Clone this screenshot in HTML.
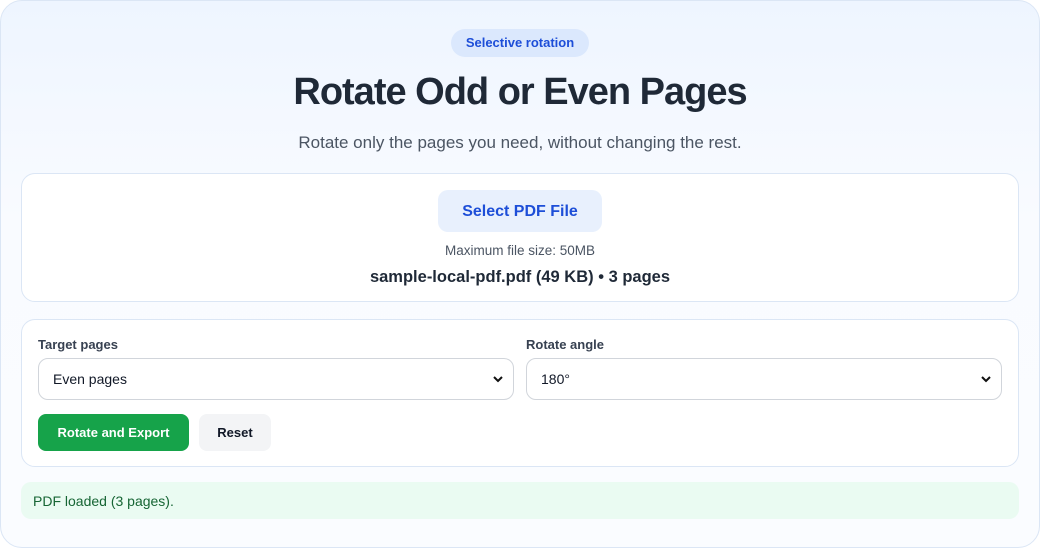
<!DOCTYPE html>
<html><head><style>
*{box-sizing:border-box;margin:0;padding:0}
body{width:1040px;height:548px;background:#fff;font-family:"Liberation Sans",sans-serif;position:relative;overflow:hidden}
.card{position:absolute;left:0;top:0;width:1040px;height:548px;border:1px solid #dbe6f5;border-radius:22px;background:linear-gradient(#eef5ff,#f9fbff 40%,#fafcff)}
.abs{position:absolute}
.pill{left:451px;top:29px;width:138px;height:28px;border-radius:14px;background:#dbe8fd;color:#1d4ed8;font-weight:bold;font-size:13px;line-height:28px;text-align:center}
h1{position:absolute;left:0;width:1040px;top:71px;text-align:center;font-size:38px;color:#1f2937;letter-spacing:-1px;font-weight:bold}
.sub{left:0;width:1040px;top:133px;text-align:center;font-size:17px;color:#4b5563}
.box{background:#fff;border:1px solid #dbe6f5;border-radius:14px}
.btn1{left:438px;top:190px;width:164px;height:42px;border-radius:10px;background:#e8f0fd;color:#1d4ed8;font-weight:bold;font-size:16px;line-height:44px;text-align:center}
.lbl{font-size:13px;font-weight:bold;color:#374151}
.sel{height:42px;border:1px solid #d1d5db;border-radius:10px;background:#fff;font-size:14px;color:#111827;line-height:40px;padding-left:14px}
.sel svg{position:absolute;right:10px;top:15px}
</style></head><body>
<div class="card"></div>
<div class="abs pill">Selective rotation</div>
<h1>Rotate Odd or Even Pages</h1>
<div class="abs sub">Rotate only the pages you need, without changing the rest.</div>
<div class="abs box" style="left:21px;top:173px;width:998px;height:129px"></div>
<div class="abs btn1">Select PDF File</div>
<div class="abs" style="left:0;width:1040px;top:243px;text-align:center;font-size:13.5px;color:#4b5563">Maximum file size: 50MB</div>
<div class="abs" style="left:0;width:1040px;top:268px;text-align:center;font-size:16.5px;font-weight:bold;color:#1f2937">sample-local-pdf.pdf (49 KB) • 3 pages</div>
<div class="abs box" style="left:21px;top:319px;width:998px;height:148px"></div>
<div class="abs lbl" style="left:38px;top:337px">Target pages</div>
<div class="abs lbl" style="left:526px;top:337px">Rotate angle</div>
<div class="abs sel" style="left:38px;top:358px;width:476px">Even pages<svg width="10" height="10" viewBox="0 0 10 10"><path d="M1 3l4 4 4-4" stroke="#111" stroke-width="2" fill="none"/></svg></div>
<div class="abs sel" style="left:526px;top:358px;width:476px">180°<svg width="10" height="10" viewBox="0 0 10 10"><path d="M1 3l4 4 4-4" stroke="#111" stroke-width="2" fill="none"/></svg></div>
<div class="abs" style="left:38px;top:414px;width:151px;height:37px;border-radius:8px;background:#16a34a;color:#fff;font-weight:bold;font-size:13px;line-height:37px;text-align:center">Rotate and Export</div>
<div class="abs" style="left:199px;top:414px;width:72px;height:37px;border-radius:8px;background:#f3f4f6;color:#111827;font-weight:bold;font-size:13px;line-height:37px;text-align:center">Reset</div>
<div class="abs" style="left:21px;top:482px;width:998px;height:37px;border-radius:10px;background:#eafbf2;color:#166534;font-size:14px;line-height:38px;padding-left:12px">PDF loaded (3 pages).</div>
</body></html>
